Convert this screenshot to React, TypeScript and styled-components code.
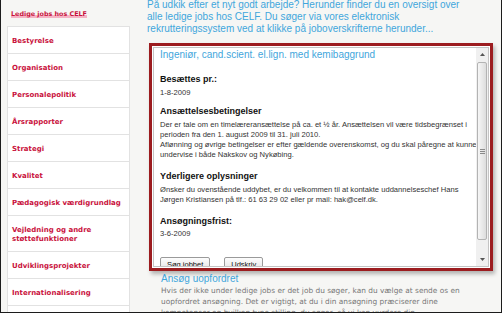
import styled, { createGlobalStyle } from "styled-components";

const GlobalStyle = createGlobalStyle`
  html, body {
    margin: 0;
    padding: 0;
    background: #f6f6f4;
  }
  body {
    width: 502px;
    height: 313px;
    overflow: hidden;
  }
`;

const menu = [
  ["Bestyrelse"],
  ["Organisation"],
  ["Personalepolitik"],
  ["Årsrapporter"],
  ["Strategi"],
  ["Kvalitet"],
  ["Pædagogisk værdigrundlag"],
  ["Vejledning og andre", "støttefunktioner"],
  ["Udviklingsprojekter"],
  ["Internationalisering"],
  [],
];

const ArrowUp = () => (
  <svg width="5" height="3" viewBox="0 0 5 3">
    <path d="M0 3 L2.5 0 L5 3 Z" fill="#555" />
  </svg>
);

const ArrowDown = () => (
  <svg width="5" height="3" viewBox="0 0 5 3">
    <path d="M0 0 L2.5 3 L5 0 Z" fill="#555" />
  </svg>
);

export default function App() {
  return (
    <>
      <GlobalStyle />
      <Frame>
        <Sidebar>
          <Current>
            <CurrentLabel>Ledige jobs hos CELF</CurrentLabel>
          </Current>
          {menu.map((lines, n) => (
            <MenuItem key={n}>
              {lines.map((l, i) => (
                <span key={l}>
                  {i > 0 && <br />}
                  {l}
                </span>
              ))}
            </MenuItem>
          ))}
        </Sidebar>

        <Main>
          <Intro>
            <Line>På udkik efter et nyt godt arbejde? Herunder finder du en oversigt over</Line>
            <Line>alle ledige jobs hos CELF. Du søger via vores elektronisk</Line>
            <Line>rekrutteringssystem ved at klikke på joboverskrifterne herunder...</Line>
          </Intro>

          <JobBox>
            <Pane>
              <PaneContent>
                <JobTitle>Ingeniør, cand.scient. el.lign. med kemibaggrund</JobTitle>

                <Heading $top={12}>Besættes pr.:</Heading>
                <Value $top={3}>1-8-2009</Value>

                <Heading $top={7}>Ansættelsesbetingelser</Heading>
                <Body $top={3}>
                  <Line>Der er tale om en timelæreransættelse på ca. et ½ år. Ansættelsen vil være tidsbegrænset i</Line>
                  <Line>perioden fra den 1. august 2009 til 31. juli 2010.</Line>
                  <Line>Aflønning og øvrige betingelser er efter gældende overenskomst, og du skal påregne at kunne</Line>
                  <Line>undervise i både Nakskov og Nykøbing.</Line>
                </Body>

                <Heading $top={10}>Yderligere oplysninger</Heading>
                <Body $top={3}>
                  <Line>Ønsker du ovenstående uddybet, er du velkommen til at kontakte uddannelseschef Hans</Line>
                  <Line>Jørgen Kristiansen på tlf.: 61 63 29 02 eller pr mail: hak@celf.dk.</Line>
                </Body>

                <Heading $top={10}>Ansøgningsfrist:</Heading>
                <Value $top={2}>3-6-2009</Value>

                <Buttons>
                  <Button>Søg jobbet</Button>
                  <Button>Udskriv</Button>
                </Buttons>
              </PaneContent>

              <Scrollbar>
                <ScrollButton>
                  <ArrowUp />
                </ScrollButton>
                <Track>
                  <Thumb>
                    <Grip />
                    <Grip />
                    <Grip />
                  </Thumb>
                </Track>
                <ScrollButton>
                  <ArrowDown />
                </ScrollButton>
              </Scrollbar>
            </Pane>
          </JobBox>

          <SubTitle>Ansøg uopfordret</SubTitle>
          <Gray>
            <Line>Hvis der ikke under ledige jobs er det job du søger, kan du vælge at sende os en</Line>
            <Line>uopfordret ansøgning. Det er vigtigt, at du i din ansøgning præciserer dine</Line>
            <Line>kompetencer og hvilken type stilling, du søger, så vi kan vurdere din</Line>
          </Gray>
        </Main>
      </Frame>
    </>
  );
}

const Frame = styled.div`
  box-sizing: border-box;
  width: 502px;
  height: 313px;
  border: 1px solid #1c1c1c;
  border-top: none;
  background: #f6f6f4;
  display: flex;
  overflow: hidden;
`;

const Sidebar = styled.nav`
  width: 123px;
  padding-left: 6px;
  flex-shrink: 0;
  display: flex;
  flex-direction: column;
  font-family: "DejaVu Sans", Verdana, sans-serif;
  font-weight: bold;
  font-size: 7px;
  line-height: 9px;
  color: #c9123d;
`;

const Current = styled.div`
  flex-shrink: 0;
  height: 26px;
  box-sizing: border-box;
  padding: 10px 4px 0;
  font-size: 6.4px;
`;

const CurrentLabel = styled.span`
  background: linear-gradient(transparent 60%, #f5b3c4 60%);
  white-space: nowrap;
`;

const MenuItem = styled.div`
  flex-shrink: 0;
  min-height: 27px;
  box-sizing: border-box;
  background: #fff;
  border: 1px solid #e2e2e2;
  border-bottom: none;
  padding: 10px 4px 7px;
  white-space: nowrap;
`;

const Main = styled.main`
  flex: 1;
  min-width: 0;
  padding-left: 17px;
  display: flex;
  flex-direction: column;
`;

const Line = styled.div`
  white-space: nowrap;
`;

const Intro = styled.div`
  margin-top: -1px;
  font-family: "Liberation Sans", Arial, sans-serif;
  font-size: 10px;
  line-height: 12px;
  color: #3fa6dc;
`;

const JobBox = styled.section`
  flex-shrink: 0;
  margin: 8px 0 0 2px;
  width: 344px;
  height: 228px;
  box-sizing: border-box;
  border: 3px solid #9c1c1f;
  padding: 1px;
  background: #fff;
  box-shadow: 2px 3px 4px rgba(0, 0, 0, 0.28);
`;

const Pane = styled.div`
  height: 100%;
  box-sizing: border-box;
  border: 1px solid #c4c4c4;
  display: flex;
  background: #fff;
`;

const PaneContent = styled.div`
  flex: 1;
  min-width: 0;
  overflow: hidden;
  padding: 1px 0 0 6px;
  font-family: "Liberation Sans", Arial, sans-serif;
  color: #333;
`;

const JobTitle = styled.div`
  font-size: 10px;
  line-height: 12px;
  color: #3fa6dc;
  white-space: nowrap;
`;

const Heading = styled.div<{ $top: number }>`
  margin-top: ${({ $top }) => $top}px;
  font-size: 9px;
  line-height: 12px;
  font-weight: bold;
  color: #111;
`;

const Value = styled.div<{ $top: number }>`
  margin-top: ${({ $top }) => $top}px;
  font-size: 7.6px;
  line-height: 10px;
`;

const Body = styled.div<{ $top: number }>`
  margin-top: ${({ $top }) => $top}px;
  font-size: 7.6px;
  line-height: 10px;
`;

const Buttons = styled.div`
  margin-top: 18px;
  display: flex;
  gap: 14px;
`;

const Button = styled.button`
  height: 16px;
  padding: 0 6px;
  border: 1px solid #9a9a9a;
  border-radius: 2px;
  background: linear-gradient(#fdfdfd, #dedede);
  font-family: "Liberation Sans", Arial, sans-serif;
  font-size: 7.5px;
  color: #111;
  line-height: 14px;
`;

const Scrollbar = styled.div`
  width: 12px;
  flex-shrink: 0;
  display: flex;
  flex-direction: column;
  background: #f0f0f0;
`;

const ScrollButton = styled.div`
  height: 13px;
  display: flex;
  align-items: center;
  justify-content: center;
`;

const Track = styled.div`
  flex: 1;
  padding-top: 1px;
`;

const Thumb = styled.div`
  height: 178px;
  box-sizing: border-box;
  margin: 0 1px;
  border: 1px solid #b3b3b3;
  border-radius: 2px;
  background: linear-gradient(to right, #f6f6f6, #dddddd);
  display: flex;
  flex-direction: column;
  align-items: center;
  justify-content: center;
  gap: 1px;
`;

const Grip = styled.div`
  width: 5px;
  height: 1px;
  background: #8a8a8a;
`;

const SubTitle = styled.div`
  margin: 2px 0 0 14px;
  font-family: "Liberation Sans", Arial, sans-serif;
  font-size: 10px;
  line-height: 12px;
  color: #3fa6dc;
`;

const Gray = styled.div`
  margin: 0 0 0 14px;
  font-family: "DejaVu Sans", Verdana, sans-serif;
  font-size: 7.4px;
  line-height: 11px;
  color: #777;
`;
